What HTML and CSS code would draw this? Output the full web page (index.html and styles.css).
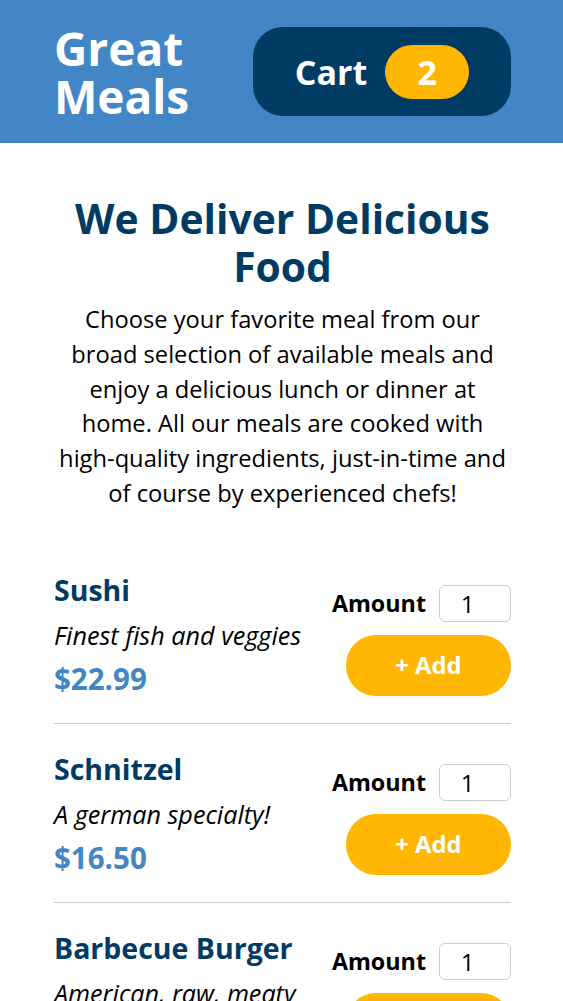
FILE: index.html
```html
<!DOCTYPE html>
<html lang="en">
<head>
<meta charset="utf-8">
<title>Great Meals</title>
<link rel="stylesheet" href="styles.css">
</head>
<body>
<header class="header">
  <h1 class="brand">Great Meals</h1>
  <button class="cart" type="button">
    <span class="cart-label">Cart</span>
    <span class="cart-badge">2</span>
  </button>
</header>
<main class="main">
  <section class="summary">
    <h2 class="summary-title">We Deliver Delicious Food</h2>
    <p class="summary-text">Choose your favorite meal from our broad selection of available meals and enjoy a delicious lunch or dinner at home. All our meals are cooked with high-quality ingredients, just-in-time and of course by experienced chefs!</p>
  </section>
  <section class="meals">
    <ul class="meal-list">
      <li class="meal">
        <div class="meal-info">
          <h3 class="meal-name">Sushi</h3>
          <div class="meal-desc">Finest fish and veggies</div>
          <div class="meal-price">$22.99</div>
        </div>
        <form class="meal-form">
          <div class="amount">
            <label class="amount-label" for="amount-1">Amount</label>
            <input class="amount-input" id="amount-1" type="number" value="1">
          </div>
          <button class="add-btn" type="button">+ Add</button>
        </form>
      </li>
      <li class="meal">
        <div class="meal-info">
          <h3 class="meal-name">Schnitzel</h3>
          <div class="meal-desc">A german specialty!</div>
          <div class="meal-price">$16.50</div>
        </div>
        <form class="meal-form">
          <div class="amount">
            <label class="amount-label" for="amount-2">Amount</label>
            <input class="amount-input" id="amount-2" type="number" value="1">
          </div>
          <button class="add-btn" type="button">+ Add</button>
        </form>
      </li>
      <li class="meal">
        <div class="meal-info">
          <h3 class="meal-name">Barbecue Burger</h3>
          <div class="meal-desc">American, raw, meaty</div>
          <div class="meal-price">$12.99</div>
        </div>
        <form class="meal-form">
          <div class="amount">
            <label class="amount-label" for="amount-3">Amount</label>
            <input class="amount-input" id="amount-3" type="number" value="1">
          </div>
          <button class="add-btn" type="button">+ Add</button>
        </form>
      </li>
    </ul>
  </section>
</main>
</body>
</html>
```
FILE: styles.css
```css
* { box-sizing: border-box; }

html, body {
  margin: 0;
  padding: 0;
}

body {
  font-family: "Open Sans", "Noto Sans", sans-serif;
  color: #000;
  background: #fff;
}

.header {
  height: 143px;
  background: #4286c5;
  display: flex;
  align-items: center;
  justify-content: space-between;
  padding: 0 52px 0 54px;
}

.brand {
  margin: 0;
  color: #fff;
  font-size: 46px;
  line-height: 48px;
  font-weight: 700;
  width: 150px;
}

.cart {
  display: flex;
  align-items: center;
  justify-content: center;
  gap: 18px;
  margin: 0;
  border: 0;
  background: #003b64;
  color: #fff;
  font-family: inherit;
  font-size: 34px;
  font-weight: 700;
  padding: 0;
  border-radius: 30px;
  height: 89px;
  width: 258px;
}

.cart-badge {
  display: flex;
  align-items: center;
  justify-content: center;
  width: 84px;
  height: 54px;
  border-radius: 27px;
  background: #ffb703;
  color: #fff;
}

.main {
  padding: 0 52px 0 54px;
}

.summary {
  text-align: center;
  padding-top: 51px;
}

.summary-title {
  margin: 0;
  color: #003b64;
  font-size: 40.8px;
  line-height: 48px;
  font-weight: 700;
}

.summary-text {
  margin: 12px -2px 0;
  font-size: 23.7px;
  line-height: 34.8px;
}

.meals {
  padding-top: 34px;
}

.meal-list {
  list-style: none;
  margin: 0;
  padding: 0;
}

.meal {
  display: flex;
  justify-content: space-between;
  align-items: center;
  padding: 27px 0 26px;
  border-bottom: 1px solid #ccc;
}

.meal-name {
  margin: 0 0 9px;
  color: #003b64;
  font-size: 28.5px;
  line-height: 36px;
  font-weight: 700;
}

.meal-desc {
  font-style: italic;
  font-size: 25.2px;
  line-height: 36px;
  margin-bottom: 8px;
}

.meal-price {
  color: #4286c5;
  font-size: 29.5px;
  line-height: 36px;
  font-weight: 700;
}

.meal-form {
  display: flex;
  flex-direction: column;
  align-items: flex-end;
  gap: 13px;
  margin: 12px 0 0;
}

.amount {
  display: flex;
  align-items: center;
  gap: 13px;
}

.amount-label {
  font-size: 23.3px;
  font-weight: 700;
}

.amount-input {
  width: 72px;
  height: 37px;
  border: 1px solid #ccc;
  border-radius: 6px;
  font-family: inherit;
  font-size: 24px;
  text-align: center;
  padding: 0;
}

.add-btn {
  width: 165px;
  height: 61px;
  border: 0;
  border-radius: 30px;
  background: #ffb703;
  color: #fff;
  font-family: inherit;
  font-size: 23.8px;
  font-weight: 700;
}
```
